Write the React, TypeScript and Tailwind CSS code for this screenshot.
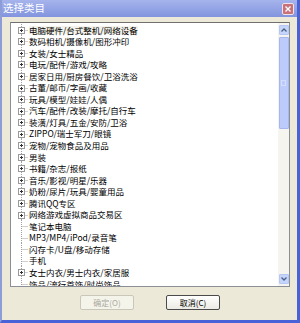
import React from 'react';

const items: { label: string; plus: boolean }[] = [
  { label: '电脑硬件/台式整机/网络设备', plus: true },
  { label: '数码相机/摄像机/图形冲印', plus: true },
  { label: '女装/女士精品', plus: true },
  { label: '电玩/配件/游戏/攻略', plus: true },
  { label: '居家日用/厨房餐饮/卫浴洗浴', plus: true },
  { label: '古董/邮币/字画/收藏', plus: true },
  { label: '玩具/模型/娃娃/人偶', plus: true },
  { label: '汽车/配件/改装/摩托/自行车', plus: true },
  { label: '装潢/灯具/五金/安防/卫浴', plus: true },
  { label: 'ZIPPO/瑞士军刀/眼镜', plus: true },
  { label: '宠物/宠物食品及用品', plus: true },
  { label: '男装', plus: true },
  { label: '书籍/杂志/报纸', plus: true },
  { label: '音乐/影视/明星/乐器', plus: true },
  { label: '奶粉/尿片/玩具/婴童用品', plus: true },
  { label: '腾讯QQ专区', plus: true },
  { label: '网络游戏虚拟商品交易区', plus: true },
  { label: '笔记本电脑', plus: false },
  { label: 'MP3/MP4/iPod/录音笔', plus: false },
  { label: '闪存卡/U盘/移动存储', plus: false },
  { label: '手机', plus: false },
  { label: '女士内衣/男士内衣/家居服', plus: true },
  { label: '饰品/流行首饰/时尚饰品', plus: false },
];

// 树节点前的连线和加号
function TreeGlyph({ plus }: { plus: boolean }) {
  return (
    <svg width="16" height="12" viewBox="0 0 16 12" className="shrink-0">
      <line x1="8.5" y1="0" x2="8.5" y2="12" stroke="#a0a0a0" strokeDasharray="1 1" />
      <line x1="8.5" y1="6.5" x2="15" y2="6.5" stroke="#a0a0a0" strokeDasharray="1 1" />
      {plus && (
        <g>
          <rect x="5.5" y="3.5" width="6" height="6" fill="#fff" stroke="#9a9a9a" />
          <line x1="7" y1="6.5" x2="10" y2="6.5" stroke="#333" />
          <line x1="8.5" y1="5" x2="8.5" y2="8" stroke="#333" />
        </g>
      )}
    </svg>
  );
}

function ScrollArrow({ up }: { up: boolean }) {
  return (
    <div className="flex h-[10px] w-[10px] items-center justify-center rounded-[1px] border border-[#b7c7f5] bg-[#c5d4fb]">
      <svg width="6" height="4" viewBox="0 0 6 4">
        <path d={up ? 'M0.5 3.5 L3 1 L5.5 3.5' : 'M0.5 0.5 L3 3 L5.5 0.5'} fill="none" stroke="#4d6185" strokeWidth="1.3" />
      </svg>
    </div>
  );
}

export default function App() {
  return (
    <div
      className="flex h-[323px] w-[300px] flex-col overflow-hidden border-b-[3px] border-l-[2px] border-r-[3px] border-b-[#4a62d8] border-l-[#8d9bd6] border-r-[#4a62d8] bg-[#ece9d8]"
      style={{ fontFamily: '"Noto Sans CJK SC", "Noto Sans", sans-serif' }}
    >
      <div className="flex h-[17px] shrink-0 items-center justify-between bg-gradient-to-b from-[#a6b4ec] to-[#8294de] pl-[1px] pr-[3px]">
        <span className="text-[10.5px] leading-none text-white">选择类目</span>
        <div className="flex h-[12px] w-[12px] items-center justify-center rounded-[2px] border border-[#f1e4e6] bg-[#c9717a]">
          <svg width="6" height="6" viewBox="0 0 6 6">
            <path d="M0.5 0.5 L5.5 5.5 M5.5 0.5 L0.5 5.5" stroke="#fff" strokeWidth="1.4" />
          </svg>
        </div>
      </div>

      <div className="flex flex-1 flex-col px-[8px] pt-[5px]">
        <div className="flex h-[265px] w-[280px] border border-[#8a8f96] border-t-[#707070] bg-white">
          <div className="flex flex-1 flex-col overflow-hidden pl-[2px] pt-[1px]">
            {items.map((item, i) => (
              <div key={item.label} className="flex h-[11.55px] shrink-0 items-center">
                <TreeGlyph plus={item.plus} />
                <span
                  className={`whitespace-nowrap text-[8.5px] leading-none text-black ${
                    i === 0 ? 'bg-[#f4f2ea]' : ''
                  }`}
                >
                  {item.label}
                </span>
              </div>
            ))}
          </div>

          <div className="flex w-[11px] flex-col items-center bg-[#f5f4ef] py-[2px]">
            <ScrollArrow up />
            <div className="mt-[2px] flex h-[92px] w-[10px] items-center justify-center rounded-[1px] border border-[#a5b7ee] bg-[#bccbfb]">
              <div className="h-[6px] w-[5px] border border-[#d5dffc]" />
            </div>
            <div className="flex-1" />
            <ScrollArrow up={false} />
          </div>
        </div>

        <div className="flex pt-[8px] pl-[70px]">
          <button className="flex h-[15px] w-[54px] items-center justify-center rounded-[2px] border border-[#c9c7ba] bg-[#f5f4ea] text-[8px] text-[#a9a89e]">
            确定(O)
          </button>
          <button className="ml-[32px] flex h-[15px] w-[54px] items-center justify-center rounded-[2px] border border-[#4b4b4b] bg-gradient-to-b from-[#ffffff] to-[#ecebe4] text-[8px] text-black">
            取消(C)
          </button>
        </div>
      </div>
    </div>
  );
}
